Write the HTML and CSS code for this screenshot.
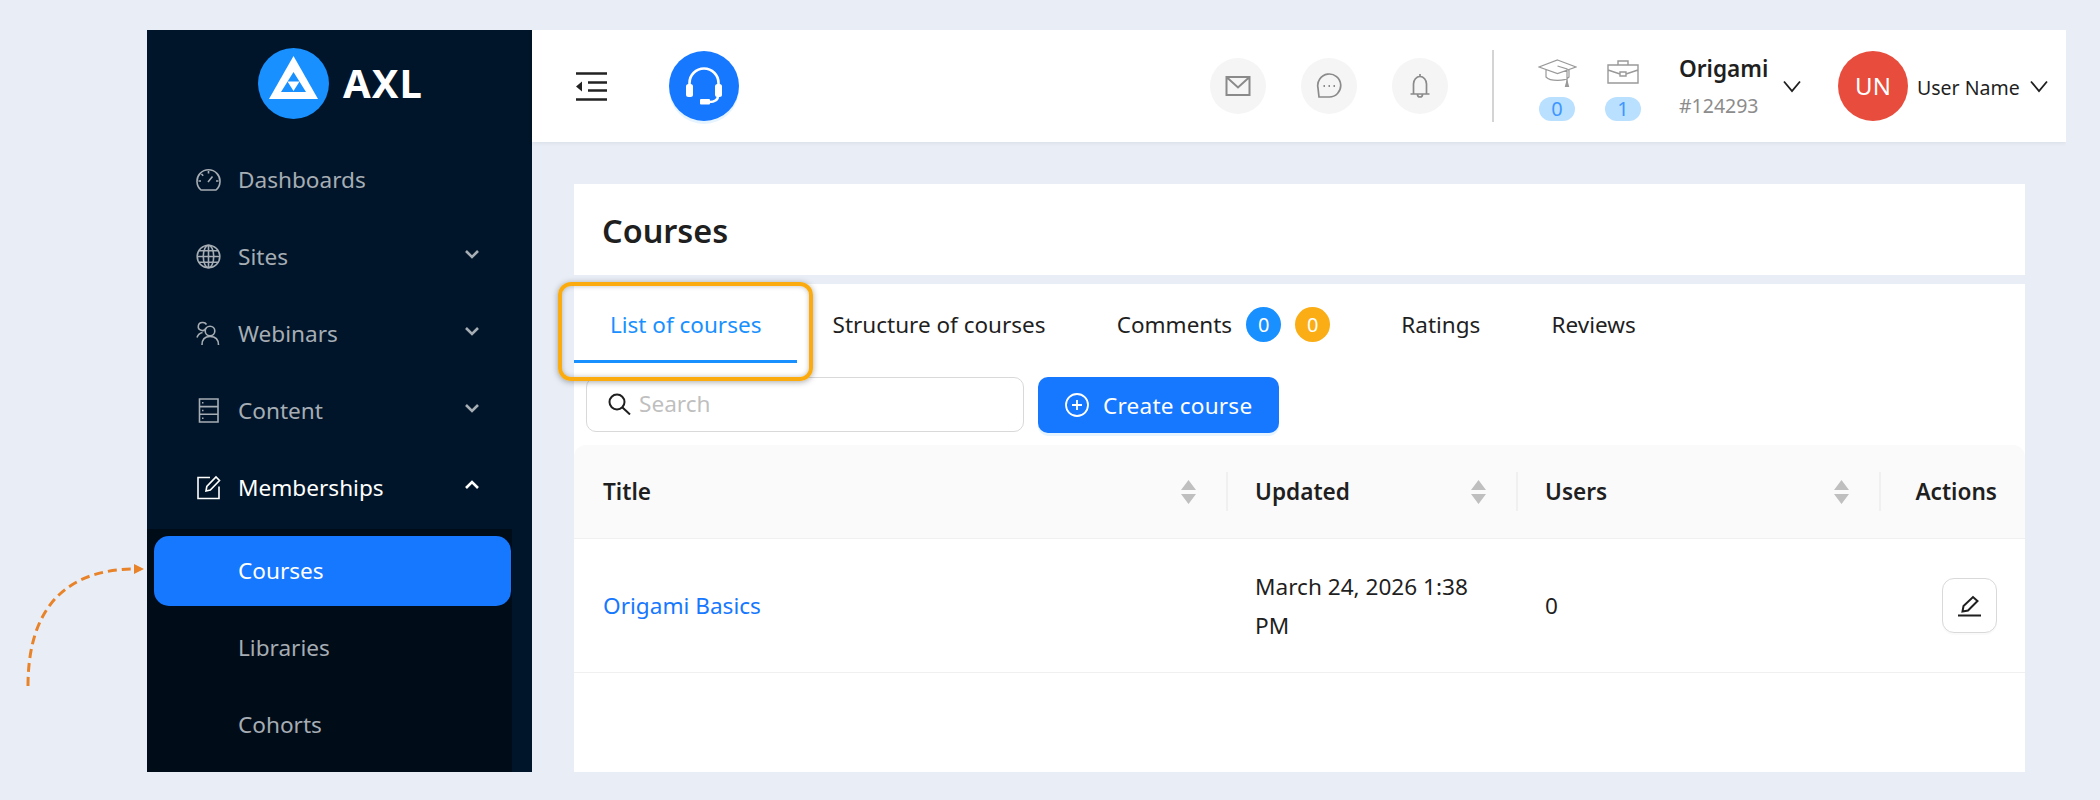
FILE: index.html
```html
<!DOCTYPE html>
<html lang="en">
<head>
    <meta charset="UTF-8">
    <meta name="viewport" content="width=device-width, initial-scale=1.0">
    <title>Courses</title>
    <link rel="stylesheet" href="styles.css">
</head>
<body>
    <!-- Dashed pointer beside the sidebar -->
    <svg class="pointer" width="147" height="130" viewBox="0 0 147 130">
        <path d="M28 122 C28 60 52 6 134 5" fill="none" stroke="#e8832a" stroke-width="3" stroke-dasharray="9 5"/>
        <path d="M134 0 L144 5 L134 10 Z" fill="#e8832a"/>
    </svg>

    <div class="app">
        <aside class="sidebar">
            <div class="logo">
                <svg width="71" height="71" viewBox="0 0 71 71">
                    <circle cx="35.5" cy="35.5" r="35.5" fill="#1890ff"/>
                    <path d="M35.5 8 L60 51 H11 Z" fill="#fff"/>
                    <path d="M35.5 24 L48 44 H23 Z" fill="#1890ff"/>
                    <path d="M29.5 33.5 H41.5 L35.5 43 Z" fill="#fff"/>
                </svg>
                <span class="logo-text">AXL</span>
            </div>
            <nav class="menu">
                <a class="menu-item">
                    <svg class="menu-icon" viewBox="0 0 25 25"><path d="M5 23 A11.5 11.5 0 1 1 20 23 Z M12 15 L16.5 9.5 M2.5 14 H5 M20 14 H22.5 M12.5 4 V6.5 M5.5 7 L7.2 8.7"/></svg>
                    <span>Dashboards</span>
                </a>
                <a class="menu-item">
                    <svg class="menu-icon" viewBox="0 0 25 25"><circle cx="12.5" cy="12.5" r="11.3"/><ellipse cx="12.5" cy="12.5" rx="5.2" ry="11.3"/><path d="M12.5 1.2 V23.8 M1.2 12.5 H23.8 M2.8 6.8 H22.2 M2.8 18.2 H22.2"/></svg>
                    <span>Sites</span>
                    <svg class="chevron" viewBox="0 0 16 10"><path d="M2 2 L8 8 L14 2"/></svg>
                </a>
                <a class="menu-item">
                    <svg class="menu-icon" viewBox="0 0 25 25"><circle cx="14" cy="10" r="4.8"/><path d="M6 24 C6 18 9 15.5 14 15.5 C19 15.5 22.5 18 22.5 24 M10 7 A4 4 0 1 1 6.5 1.5 A4.2 4.2 0 0 1 10.5 3.5 M1 16.5 C2 13.5 4 12 6.5 11.5"/></svg>
                    <span>Webinars</span>
                    <svg class="chevron" viewBox="0 0 16 10"><path d="M2 2 L8 8 L14 2"/></svg>
                </a>
                <a class="menu-item">
                    <svg class="menu-icon" viewBox="0 0 25 25"><path d="M3.5 1 H22 V24 H3.5 Z M3.5 8.6 H22 M3.5 16.3 H22 M6 4.8 H7.5 M6 12.5 H7.5 M6 20.2 H7.5"/></svg>
                    <span>Content</span>
                    <svg class="chevron" viewBox="0 0 16 10"><path d="M2 2 L8 8 L14 2"/></svg>
                </a>
                <a class="menu-item menu-open">
                    <svg class="menu-icon" viewBox="0 0 25 25"><path d="M14 2.5 H2 V23.5 H23 V11.5 M10 16 L10.8 11.5 L20 2 L23.5 5.5 L14.3 15 Z"/></svg>
                    <span>Memberships</span>
                    <svg class="chevron" viewBox="0 0 16 10"><path d="M2 8 L8 2 L14 8"/></svg>
                </a>
                <div class="submenu">
                    <a class="menu-item sub-item active"><span>Courses</span></a>
                    <a class="menu-item sub-item"><span>Libraries</span></a>
                    <a class="menu-item sub-item"><span>Cohorts</span></a>
                </div>
            </nav>
        </aside>

        <div class="main">
            <header class="topbar">
                <svg class="fold-icon" width="31" height="29" viewBox="0 0 31 29">
                    <path d="M0 1.5 H31 M12 10.5 H31 M12 18.5 H31 M0 27.5 H31" stroke="#222" stroke-width="2.6"/>
                    <path d="M0 14.5 L6 9.5 V19.5 Z" fill="#222"/>
                </svg>
                <button class="support">
                    <svg width="70" height="70" viewBox="0 0 70 70">
                        <path d="M20.5 38 V32 a14.5 14.5 0 0 1 29 0 V38 M49 45 q0 6 -9 6" fill="none" stroke="#fff" stroke-width="2.6"/>
                        <rect x="17" y="33" width="7" height="13" rx="2.5" fill="#fff"/>
                        <rect x="46" y="33" width="7" height="13" rx="2.5" fill="#fff"/>
                        <rect x="31" y="48" width="10" height="5.5" rx="1" fill="#fff"/>
                    </svg>
                </button>

                <div class="topbar-right">
                    <span class="round-btn">
                        <svg width="26" height="22" viewBox="0 0 26 22" fill="none" stroke="#8a8a8a" stroke-width="2"><path d="M1.5 2 H24.5 V20 H1.5 Z M1.5 2 L13 12.5 L24.5 2"/></svg>
                    </span>
                    <span class="round-btn">
                        <svg width="26" height="26" viewBox="0 0 26 26" fill="none" stroke="#8a8a8a" stroke-width="1.7"><path d="M3 24 H13 A11.5 11.5 0 1 0 2 15 Z"/><path d="M7.5 13 H9 M12.5 13 H14 M17.5 13 H19" stroke-width="2"/></svg>
                    </span>
                    <span class="round-btn">
                        <svg width="20" height="26" viewBox="0 0 20 26" fill="none" stroke="#8a8a8a" stroke-width="1.7"><path d="M10 1 V3.5 M3.5 21 V11 A6.5 7.5 0 0 1 16.5 11 V21 M0.5 21 H19.5 M7.5 21.5 A2.5 2.5 0 0 0 12.5 21.5"/></svg>
                    </span>
                    <span class="divider"></span>
                    <div class="stat">
                        <svg width="39" height="28" viewBox="0 0 39 28" fill="none" stroke="#999" stroke-width="1.2"><path d="M19.5 1 L38 8 L19.5 14.5 L1 8 Z M8 11 V18 C12 22.5 27 22.5 31 18 V11 M19.5 7 L29 10 V23"/><path d="M27.5 27.5 L29 22 L30.5 27.5 Z" fill="#999"/></svg>
                        <span class="pill">0</span>
                    </div>
                    <div class="stat">
                        <svg width="32" height="28" viewBox="0 0 32 28" fill="none" stroke="#999" stroke-width="1.4"><path d="M1 6 H31 V24 H1 Z M11 6 V2 H21 V6 M1 11 L13 15 M31 11 L19 15 M13 13 H19 V17 H13 Z"/></svg>
                        <span class="pill">1</span>
                    </div>
                    <div class="company">
                        <strong>Origami</strong>
                        <span>#124293</span>
                    </div>
                    <svg class="caret" width="18" height="13" viewBox="0 0 18 13"><path d="M1 1.5 L9 11 L17 1.5"/></svg>
                    <span class="avatar">UN</span>
                    <span class="user-name">User Name</span>
                    <svg class="caret" width="18" height="13" viewBox="0 0 18 13"><path d="M1 1.5 L9 11 L17 1.5"/></svg>
                </div>
            </header>

            <main class="content">
                <div class="page-title">
                    <h1>Courses</h1>
                </div>

                <section class="panel">
                    <div class="tabs">
                        <a class="tab tab-active">List of courses</a>
                        <a class="tab">Structure of courses</a>
                        <a class="tab">Comments <span class="count count-blue">0</span><span class="count count-orange">0</span></a>
                        <a class="tab">Ratings</a>
                        <a class="tab">Reviews</a>
                    </div>
                    <div class="highlight"></div>

                    <div class="toolbar">
                        <label class="search">
                            <svg width="23" height="22" viewBox="0 0 23 22" fill="none" stroke="#1f1f1f" stroke-width="2"><circle cx="9" cy="9" r="7.5"/><path d="M14.5 14.5 L22 21.5"/></svg>
                            <span>Search</span>
                        </label>
                        <button class="create-btn">
                            <svg width="24" height="24" viewBox="0 0 24 24" fill="none" stroke="#fff" stroke-width="1.8"><circle cx="12" cy="12" r="11"/><path d="M12 7 V17 M7 12 H17"/></svg>
                            Create course
                        </button>
                    </div>

                    <table class="courses">
                        <thead>
                            <tr>
                                <th class="col-title">Title
                                    <svg class="sort" width="15" height="24" viewBox="0 0 15 24"><path d="M7.5 0 L15 10 H0 Z M0 14 H15 L7.5 24 Z"/></svg>
                                </th>
                                <th class="col-updated">Updated
                                    <svg class="sort" width="15" height="24" viewBox="0 0 15 24"><path d="M7.5 0 L15 10 H0 Z M0 14 H15 L7.5 24 Z"/></svg>
                                </th>
                                <th class="col-users">Users
                                    <svg class="sort" width="15" height="24" viewBox="0 0 15 24"><path d="M7.5 0 L15 10 H0 Z M0 14 H15 L7.5 24 Z"/></svg>
                                </th>
                                <th class="col-actions">Actions</th>
                            </tr>
                        </thead>
                        <tbody>
                            <tr>
                                <td><a class="course-link">Origami Basics</a></td>
                                <td>March 24, 2026 1:38 PM</td>
                                <td>0</td>
                                <td class="cell-actions">
                                    <button class="edit-btn">
                                        <svg width="23" height="22" viewBox="0 0 23 22" fill="none" stroke="#1f1f1f" stroke-width="2"><path d="M0 20.5 H23 M4.5 16.5 L5.5 11 L15 2 L19.5 6 L10 15.5 Z"/></svg>
                                    </button>
                                </td>
                            </tr>
                        </tbody>
                    </table>
                </section>
            </main>
        </div>
    </div>
</body>
</html>
```

FILE: styles.css
```css
/* Page */
html, body {
    height: 100%;
    overflow: hidden;
}

body {
    margin: 0;
    background-color: #e9eef6;
    font-family: "Noto Sans", Arial, sans-serif;
    font-size: 22.6px;
    color: #1f1f1f;
}

.pointer {
    position: absolute;
    left: 0;
    top: 564px;
}

.app {
    display: flex;
    width: 1919px;
    height: 742px;
    margin: 30px 0 0 147px;
    overflow: hidden;
}

/* Sidebar */
.sidebar {
    flex: none;
    width: 385px;
    background-color: #001529;
}

.logo {
    display: flex;
    align-items: center;
    box-sizing: border-box;
    height: 115px;
    padding: 0 0 8px 111px;
    gap: 14px;
}

.logo-text {
    margin-top: -2px;
    font-size: 40px;
    font-weight: 700;
    color: #fff;
    letter-spacing: 1px;
}

.menu-item {
    display: flex;
    align-items: center;
    height: 70px;
    margin-bottom: 7px;
    padding: 0 52px 0 49px;
    color: #a6adb4;
}

.menu-item span {
    margin-top: -2px;
}

.menu-icon {
    flex: none;
    width: 25px;
    height: 25px;
    margin: -2px 17px 0 0;
    fill: none;
    stroke: currentColor;
    stroke-width: 1.6;
}

.chevron {
    width: 16px;
    height: 10px;
    margin-left: auto;
    margin-top: -6px;
    fill: none;
    stroke: currentColor;
    stroke-width: 2.6;
}

.menu-open {
    margin-bottom: 6px;
    color: #fff;
}

.submenu {
    width: 365px;
    height: 300px;
    padding-top: 7px;
    background-color: #000c17;
}

.sub-item {
    width: 357px;
    margin-left: 7px;
    padding-left: 84px;
    box-sizing: border-box;
    border-radius: 15px;
}

.active {
    background-color: #1677ff;
    color: #fff;
}

/* Top bar */
.main {
    flex: 1;
    min-width: 0;
    display: flex;
    flex-direction: column;
}

.topbar {
    flex: none;
    display: flex;
    align-items: center;
    height: 112px;
    padding: 0 18px 0 44px;
    background-color: #fff;
    box-shadow: 0 1px 4px rgba(0, 21, 41, 0.08);
    position: relative;
}

.support {
    width: 70px;
    height: 70px;
    margin-left: 62px;
    padding: 0;
    border: none;
    border-radius: 50%;
    background-color: #1677ff;
    box-shadow: 0 3px 0 #e6f4ff;
}

.topbar-right {
    display: flex;
    align-items: center;
    margin-left: auto;
}

.round-btn {
    display: flex;
    align-items: center;
    justify-content: center;
    width: 56px;
    height: 56px;
    margin-right: 35px;
    border-radius: 50%;
    background-color: #f5f5f5;
}

.divider {
    width: 2px;
    height: 72px;
    margin: 0 45px 0 9px;
    background-color: #d4d4d4;
}

.stat {
    display: flex;
    flex-direction: column;
    align-items: center;
    gap: 10px;
    width: 36px;
    margin: 8px 30px 0 0;
}

.pill {
    width: 36px;
    height: 24px;
    border-radius: 12px;
    background-color: #bae0ff;
    color: #4096ff;
    font-size: 20px;
    line-height: 24px;
    text-align: center;
}

.company {
    display: flex;
    flex-direction: column;
    width: 89px;
    margin: 2px 15px 0 8px;
    line-height: 1;
}

.company strong {
    font-size: 22.6px;
    font-weight: 600;
    white-space: nowrap;
}

.company span {
    margin-top: 15px;
    font-size: 19.5px;
    color: #8c8c8c;
}

.caret {
    flex: none;
    fill: none;
    stroke: #1f1f1f;
    stroke-width: 1.8;
}

.avatar {
    flex: none;
    width: 70px;
    height: 70px;
    margin: 0 9px 0 37px;
    border-radius: 50%;
    background-color: #e74c3c;
    color: #fff;
    font-size: 24px;
    line-height: 70px;
    text-align: center;
}

.user-name {
    width: 101px;
    margin: 2px 12px 0 0;
    font-size: 19.5px;
    white-space: nowrap;
}

/* Content */
.content {
    flex: 1;
    padding: 42px 41px 0 42px;
    min-height: 0;
}

.page-title {
    display: flex;
    align-items: center;
    height: 91px;
    margin-bottom: 9px;
    padding-left: 28px;
    background-color: #fff;
}

h1 {
    margin: 0;
    font-size: 32.4px;
    font-weight: 600;
}

.panel {
    position: relative;
    height: 488px;
    background-color: #fff;
}

.tabs {
    display: flex;
    font-size: 22.5px;
}

.tab {
    display: flex;
    align-items: center;
    box-sizing: border-box;
    height: 79px;
    padding: 2px 35.6px 0;
    white-space: nowrap;
}

.tab-active {
    padding-top: 5px;
    padding-left: 36px;
    color: #1890ff;
    border-bottom: 3px solid #1890ff;
}

.count {
    width: 35px;
    height: 35px;
    border-radius: 50%;
    color: #fff;
    font-size: 20px;
    line-height: 35px;
    text-align: center;
}

.count-blue {
    margin-left: 14px;
    background-color: #1890ff;
}

.count-orange {
    margin-left: 14px;
    background-color: #faad14;
}

/* Orange callout around the first tab */
.highlight {
    position: absolute;
    left: -16px;
    top: -2px;
    width: 255px;
    height: 99px;
    box-sizing: border-box;
    border: 4px solid #fbab0d;
    border-radius: 13px;
    box-shadow: 0 1px 6px rgba(0, 0, 0, 0.35), inset 0 0 5px rgba(0, 0, 0, 0.25);
}

.toolbar {
    display: flex;
    gap: 14px;
    padding: 14px 0 12px 12px;
}

.search {
    display: flex;
    align-items: center;
    gap: 8px;
    box-sizing: border-box;
    width: 438px;
    height: 55px;
    padding: 0 0 2px 21px;
    border: 1px solid #d9d9d9;
    border-radius: 10px;
    color: #bfbfbf;
}

.create-btn {
    display: flex;
    align-items: center;
    gap: 14px;
    width: 241px;
    height: 56px;
    padding: 0 0 0 27px;
    border: none;
    border-radius: 10px;
    background-color: #1677ff;
    box-shadow: 0 3px 0 #e6f4ff;
    color: #fff;
    font: inherit;
    letter-spacing: 0.2px;
    white-space: nowrap;
}

/* Table */
.courses {
    width: 100%;
    table-layout: fixed;
    border-collapse: separate;
    border-spacing: 0;
}

.courses th {
    position: relative;
    height: 93px;
    padding: 0 29px;
    background-color: #fafafa;
    border-bottom: 1px solid #f0f0f0;
    font-weight: 600;
    text-align: left;
}

.col-title {
    width: 594px;
    border-top-left-radius: 12px;
}

.col-updated {
    width: 232px;
}

.col-users {
    width: 305px;
}

.courses th.col-actions {
    padding-right: 28px;
    text-align: right;
    border-top-right-radius: 12px;
}

/* Column separators */
.col-updated::before,
.col-users::before,
.col-actions::before {
    content: "";
    position: absolute;
    left: 0;
    top: 27px;
    width: 2px;
    height: 39px;
    background-color: #f0f0f0;
}

.sort {
    position: absolute;
    right: 30px;
    top: 35px;
    fill: #bfbfbf;
}

.courses td {
    height: 133px;
    padding: 0 29px;
    border-bottom: 1px solid #f0f0f0;
    line-height: 39px;
}

.course-link {
    color: #1677ff;
}

.courses td.cell-actions {
    padding-right: 28px;
    text-align: right;
}

.edit-btn {
    display: inline-flex;
    align-items: center;
    justify-content: center;
    width: 55px;
    height: 55px;
    padding: 0;
    border: 1px solid #d9d9d9;
    border-radius: 12px;
    background-color: #fff;
    box-shadow: 0 2px 0 rgba(0, 0, 0, 0.02);
    vertical-align: middle;
}
```
